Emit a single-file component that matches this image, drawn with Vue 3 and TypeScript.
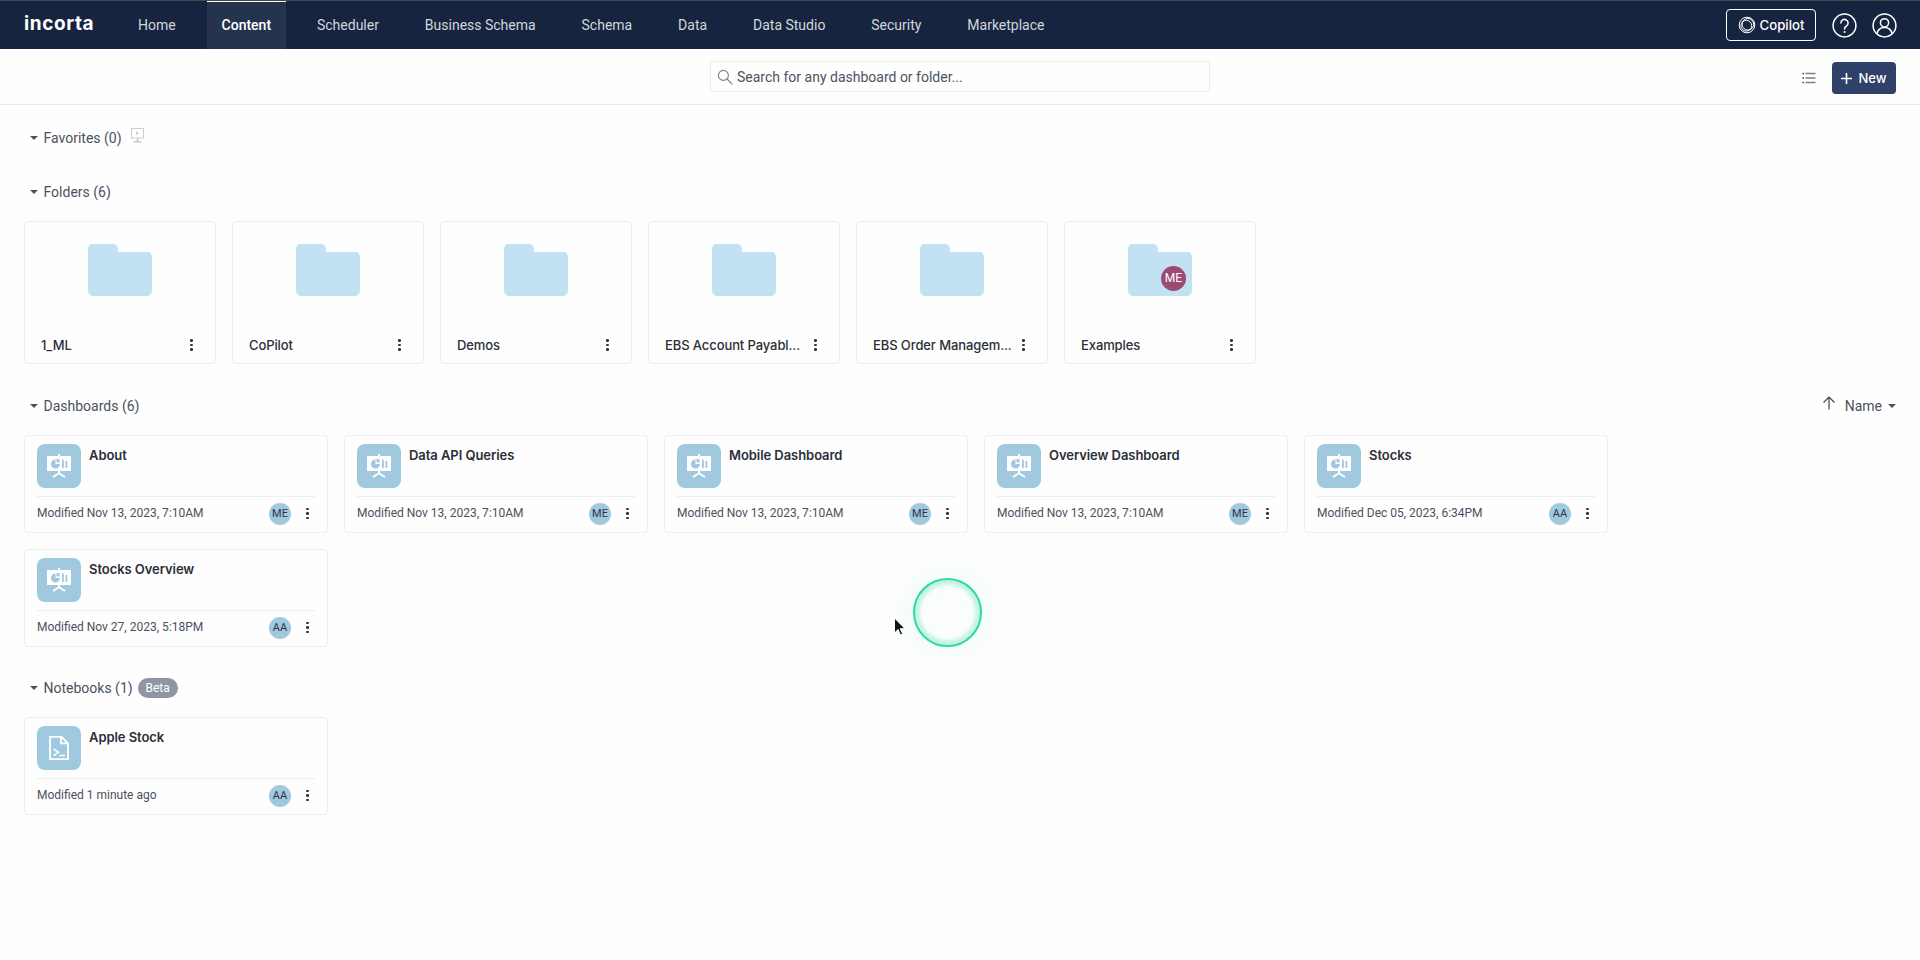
<script setup lang="ts">
const navItems: string[] = ['Home', 'Content', 'Scheduler', 'Business Schema', 'Schema', 'Data', 'Data Studio', 'Security', 'Marketplace']
const folders = [
  { name: '1_ML', owner: '' },
  { name: 'CoPilot', owner: '' },
  { name: 'Demos', owner: '' },
  { name: 'EBS Account Payabl...', owner: '' },
  { name: 'EBS Order Managem...', owner: '' },
  { name: 'Examples', owner: 'ME' },
]
const dashboards = [
  { name: 'About', modified: 'Modified Nov 13, 2023, 7:10AM', owner: 'ME' },
  { name: 'Data API Queries', modified: 'Modified Nov 13, 2023, 7:10AM', owner: 'ME' },
  { name: 'Mobile Dashboard', modified: 'Modified Nov 13, 2023, 7:10AM', owner: 'ME' },
  { name: 'Overview Dashboard', modified: 'Modified Nov 13, 2023, 7:10AM', owner: 'ME' },
  { name: 'Stocks', modified: 'Modified Dec 05, 2023, 6:34PM', owner: 'AA' },
  { name: 'Stocks Overview', modified: 'Modified Nov 27, 2023, 5:18PM', owner: 'AA' },
]
</script>

<template>
  <div class="page">
    <header class="topbar">
      <div class="logo">incorta</div>
      <nav class="nav">
        <a v-for="item in navItems" :key="item" class="nav-item" :class="{ active: item === 'Content' }">{{ item }}</a>
      </nav>
      <div class="top-right">
        <button class="copilot">
          <svg width="18" height="18" viewBox="0 0 18 18" fill="none" stroke="#fff" stroke-width="1">
            <circle cx="9" cy="9" r="7.8" />
            <circle cx="9.9" cy="8.3" r="5.8" />
            <circle cx="8.3" cy="9.7" r="5.4" />
          </svg>
          <span>Copilot</span>
        </button>
        <svg class="round-icon" width="25" height="25" viewBox="0 0 25 25" fill="none" stroke="#fff" stroke-width="1.5">
          <circle cx="12.5" cy="12.5" r="11.4" />
          <path d="M8.9 10a3.6 3.6 0 1 1 5.6 3c-1.3.8-2 1.4-2 3" stroke-linecap="round" />
          <circle cx="12.5" cy="18.9" r="1" fill="#fff" stroke="none" />
        </svg>
        <svg class="round-icon" width="25" height="25" viewBox="0 0 25 25" fill="none" stroke="#fff" stroke-width="1.5">
          <circle cx="12.5" cy="12.5" r="11.4" />
          <circle cx="12.5" cy="9.8" r="4.1" />
          <path d="M5 20.6c.7-3.7 3.6-6.2 7.5-6.2s6.800 2.500 7.500 6.200" />
        </svg>
      </div>
    </header>

    <div class="toolbar">
      <div class="search">
        <svg width="16" height="16" viewBox="0 0 16 16" fill="none" stroke="#7c828c" stroke-width="1.1">
          <circle cx="6.4" cy="6.4" r="5" />
          <path d="M10 10l5 5" stroke-linecap="round" />
        </svg>
        <span>Search for any dashboard or folder...</span>
      </div>
      <div class="tool-right">
        <svg width="14" height="12" viewBox="0 0 14 12" fill="none" stroke="#7a808a">
          <path d="M3.500 1.500h10M3.500 6h10M3.500 10.500h10" stroke-width="1.4" />
          <path d="M.5 1.500h1.500M.5 6h1.500M.5 10.500h1.500" stroke="#3d4450" stroke-width="1.3" />
        </svg>
        <button class="new-btn">
          <svg width="11" height="11" viewBox="0 0 11 11" stroke="#fff" stroke-width="1.6"><path d="M5.500 0v11M0 5.500h11" /></svg>
          <span>New</span>
        </button>
      </div>
    </div>

    <main class="main">
      <section class="section fav">
        <div class="heading">
          <i class="caret"></i><span>Favorites (0)</span>
          <svg class="fav-icon" width="13" height="15" viewBox="0 0 13 15" fill="none" stroke="#c9ccd1">
            <rect x=".5" y=".5" width="12" height="9.500" />
            <path d="M5 3.200l3 2-3 2z" fill="#c9ccd1" stroke="none" />
            <path d="M6.500 10v3M2.500 13.700h8" stroke-width="1.6" />
          </svg>
        </div>
      </section>

      <section class="section folders-sec">
        <div class="heading"><i class="caret"></i><span>Folders (6)</span></div>
        <div class="folder-grid">
          <div v-for="f in folders" :key="f.name" class="folder-card">
            <div class="folder-art">
              <svg width="64" height="52" viewBox="0 0 64 52">
                <path d="M0 5a5 5 0 0 1 5-5h20a5 5 0 0 1 5 5v3h29a5 5 0 0 1 5 5v34a5 5 0 0 1-5 5H5a5 5 0 0 1-5-5z" fill="#c2e1f3" />
              </svg>
              <span v-if="f.owner" class="folder-owner">{{ f.owner }}</span>
            </div>
            <div class="folder-foot">
              <span class="folder-name">{{ f.name }}</span>
              <span class="dots"><i></i><i></i><i></i></span>
            </div>
          </div>
        </div>
      </section>

      <section class="section dash-sec">
        <div class="heading heading-row">
          <div class="heading-left"><i class="caret"></i><span>Dashboards (6)</span></div>
          <div class="sort">
            <svg width="14" height="14" viewBox="0 0 14 14" fill="none" stroke="#3b424d" stroke-width="1.2"><path d="M7 13.500V1M1.500 6.500L7 1l5.500 5.500" /></svg>
            <span>Name</span>
            <i class="caret"></i>
          </div>
        </div>
        <div class="dash-grid">
          <div v-for="d in dashboards" :key="d.name" class="dash-card">
            <div class="dash-top">
              <div class="tile">
                <svg width="44" height="44" viewBox="0 0 44 44">
                  <path d="M21 10h2v2h11v15H23v1.800l5.500 3.500-1 1.400L22 30.200l-5.500 3.500-1-1.400 5.500-3.500V27H10V12h11z" fill="#fff" />
                  <path d="M18.500 15.500a4.500 4.500 0 1 0 4.500 4.500h-4.500z" fill="#a0c8de" />
                  <path d="M19.500 15h3v3.500h-3z" fill="#a0c8de" />
                  <path d="M25 15.500h1.800v8.500H25zM28.500 17h1.800v7h-1.800z" fill="#a0c8de" />
                </svg>
              </div>
              <div class="dash-name">{{ d.name }}</div>
            </div>
            <div class="dash-foot">
              <span class="modified">{{ d.modified }}</span>
              <span class="avatar">{{ d.owner }}</span>
              <span class="dots"><i></i><i></i><i></i></span>
            </div>
          </div>
        </div>
      </section>

      <section class="section note-sec">
        <div class="heading">
          <i class="caret"></i><span>Notebooks (1)</span><span class="beta">Beta</span>
        </div>
        <div class="dash-grid">
          <div class="dash-card">
            <div class="dash-top">
              <div class="tile">
                <svg width="44" height="44" viewBox="0 0 44 44" fill="none" stroke="#fff" stroke-width="1.800">
                  <path d="M13 10.900h11.500l6.500 6.500v15.700H13z" />
                  <path d="M24 10.900v6.500h7" />
                  <path d="M16.500 23l5 3.300-5 3.300" stroke-width="1.500" />
                  <path d="M22.500 29.500h5.500" stroke-width="1.500" />
                </svg>
              </div>
              <div class="dash-name">Apple Stock</div>
            </div>
            <div class="dash-foot">
              <span class="modified">Modified 1 minute ago</span>
              <span class="avatar">AA</span>
              <span class="dots"><i></i><i></i><i></i></span>
            </div>
          </div>
        </div>
      </section>
    </main>

    <div class="pulse"><div class="ring"></div></div>
    <svg class="cursor" width="14" height="20" viewBox="0 0 14 20">
      <path d="M1.500 1v15l3.500-3.500 2.500 5.500 2.200-1-2.500-5.300h4.800z" fill="#111" stroke="#fff" stroke-width="1" />
    </svg>
  </div>
</template>

<style>
html, body { margin: 0; background: #fefefe; }
</style>

<style scoped>
.page {
  position: relative;
  height: 960px;
  overflow: hidden;
  background: #fefefe;
  font-family: Roboto, "Liberation Sans", sans-serif;
  color: #4a5260;
}
.topbar {
  height: 48px;
  border-top: 1px solid #45474c;
  background: #17243f;
  display: flex;
  align-items: stretch;
  box-sizing: content-box;
}
.logo {
  width: 71px;
  margin-left: 24px;
  font-family: Inter, sans-serif;
  font-weight: 700;
  font-size: 19px;
  letter-spacing: 0.6px;
  line-height: 46px;
  white-space: nowrap;
  color: #fff;
}
.nav { display: flex; gap: 15.9px; margin-left: 28px; }
.nav-item {
  padding: 0 15px;
  font-size: 14px;
  line-height: 48px;
  color: #d3d6dc;
  box-sizing: border-box;
}
.nav-item.active {
  font-weight: 500;
  color: #fff;
  background: #26334f;
  box-shadow: inset 0 1px 0 #fff;
}
.top-right { margin-left: auto; display: flex; align-items: center; padding-right: 23px; }
.copilot {
  width: 90px;
  height: 32px;
  margin-right: 16px;
  border: 1px solid #fff;
  border-radius: 4px;
  background: transparent;
  color: #fff;
  display: flex;
  align-items: center;
  justify-content: center;
  gap: 4px;
  padding: 0;
  font: 500 13.200px Inter, sans-serif;
}
.round-icon { display: block; }
.round-icon + .round-icon { margin-left: 15px; }
.toolbar {
  position: relative;
  height: 56px;
  border-bottom: 1px solid #e9eaec;
  box-sizing: border-box;
  display: flex;
  align-items: center;
  justify-content: center;
}
.search {
  width: 500px;
  height: 31px;
  border: 1px solid #eceef0;
  border-radius: 2px;
  box-sizing: border-box;
  display: flex;
  align-items: center;
  gap: 4px;
  padding-left: 6px;
  font-size: 14px;
  color: #4c5361;
}
.tool-right {
  position: absolute;
  right: 24px;
  top: 13px;
  display: flex;
  align-items: center;
  gap: 16px;
}
.new-btn {
  width: 64px;
  height: 32px;
  border: 0;
  border-radius: 4px;
  background: #2f4069;
  color: #fff;
  display: flex;
  align-items: center;
  justify-content: center;
  gap: 6px;
  padding: 0;
  font: 500 13px Inter, sans-serif;
}
.main { padding: 23px 24px 0; }
.heading {
  height: 20px;
  display: flex;
  align-items: center;
  font-size: 14px;
  line-height: 20px;
  color: #4a5260;
}
.caret {
  display: inline-block;
  width: 0;
  height: 0;
  margin: 0 6px 0 5.5px;
  border-left: 4px solid transparent;
  border-right: 4px solid transparent;
  border-top: 4px solid #4a5260;
}
.fav-icon { margin: -6px 0 0 9px; }
.folders-sec { margin-top: 34px; }
.dash-sec { margin-top: 32px; }
.note-sec { margin-top: 31px; }
.folder-grid { display: flex; gap: 16px; margin-top: 19px; }
.folder-card {
  width: 192px;
  height: 143px;
  border: 1px solid #eceef0;
  border-radius: 4px;
  box-sizing: border-box;
  display: flex;
  flex-direction: column;
}
.folder-art {
  position: relative;
  width: 64px;
  height: 52px;
  margin: 22px auto 0;
}
.folder-art svg { display: block; }
.folder-owner {
  position: absolute;
  left: 33px;
  top: 22px;
  width: 25px;
  height: 25px;
  border-radius: 50%;
  background: #9c4a72;
  color: #fff;
  font-size: 12px;
  line-height: 25px;
  text-align: center;
}
.folder-foot {
  margin-top: auto;
  height: 36px;
  display: flex;
  align-items: center;
  justify-content: space-between;
  padding: 0 22px 0 16px;
  box-sizing: border-box;
}
.folder-name {
  font: 500 13px Inter, sans-serif;
  letter-spacing: -0.1px;
  color: #2a2f38;
  white-space: nowrap;
}
.dots { display: flex; flex-direction: column; gap: 2px; width: 3px; flex: none; }
.dots i { width: 2.500px; height: 2.500px; border-radius: 50%; background: #2d323b; }
.heading-row { justify-content: space-between; }
.heading-left { display: flex; align-items: center; }
.sort { display: flex; align-items: center; gap: 9px; }
.sort svg { margin-top: -6px; }
.sort .caret { margin: 0 0 0 -3px; }
.dash-grid {
  display: flex;
  flex-wrap: wrap;
  gap: 16px;
  width: 1592px;
  margin-top: 19px;
}
.dash-card {
  width: 304px;
  height: 98px;
  border: 1px solid #eceef0;
  border-radius: 4px;
  box-sizing: border-box;
  padding: 8px 12px 0;
}
.dash-top {
  display: flex;
  gap: 8px;
  height: 52px;
  border-bottom: 1px solid #eceef0;
}
.tile {
  width: 44px;
  height: 44px;
  border-radius: 8px;
  background: #a0c8de;
  flex: none;
}
.tile svg { display: block; }
.dash-name {
  font: 600 13px/20px Inter, sans-serif;
  letter-spacing: -0.06px;
  color: #2a2f38;
  margin-top: 1px;
}
.dash-foot {
  height: 33px;
  display: flex;
  align-items: center;
}
.modified { font-size: 12px; color: #4a5260; margin-bottom: 2px; }
.avatar {
  width: 22px;
  height: 22px;
  margin-left: auto;
  border-radius: 50%;
  background: #a0c8de;
  color: #2f3540;
  font-size: 11px;
  line-height: 22px;
  text-align: center;
}
.dash-foot .dots { margin: 0 6px 0 15px; }
.beta {
  width: 40px;
  height: 20px;
  margin-left: 5px;
  border-radius: 10px;
  background: #8f96a1;
  color: #fff;
  font-size: 12px;
  line-height: 20px;
  text-align: center;
}
.pulse {
  position: absolute;
  left: 893px;
  top: 558px;
  width: 108px;
  height: 108px;
  border-radius: 50%;
  background: radial-gradient(circle closest-side, #f5fcfb 0%, #f5fcfb 72%, #fefefe 100%);
  display: flex;
  align-items: center;
  justify-content: center;
}
.ring {
  width: 69px;
  height: 69px;
  box-sizing: border-box;
  border: 2px solid #2bdc9f;
  border-radius: 50%;
  background: radial-gradient(circle closest-side, #fefefe 0%, #f9fdfc 78%, #d3f7ea 88%, #c2f3e1 95%, #c8f4e4 100%);
}
.cursor {
  position: absolute;
  left: 893px;
  top: 617px;
}
</style>
